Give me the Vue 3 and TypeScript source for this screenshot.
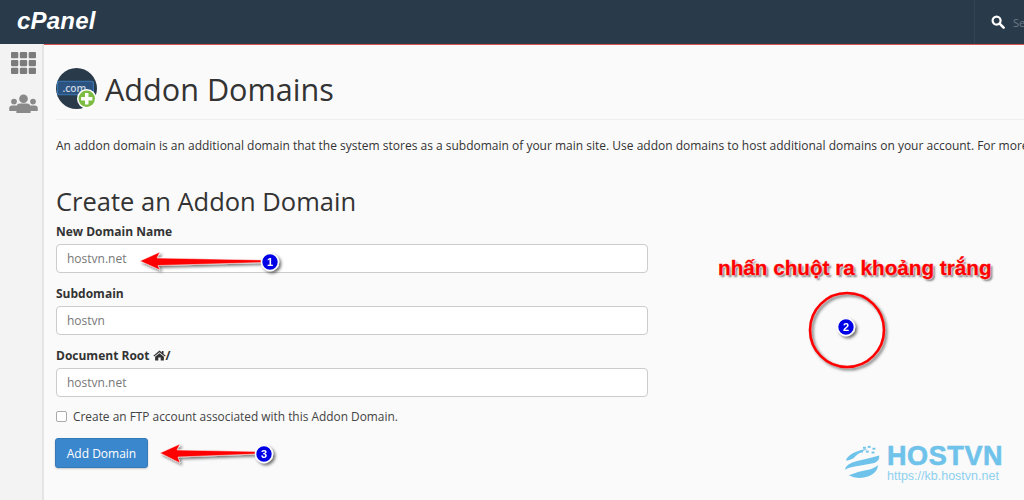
<template>
  <div class="page">
    <header class="topbar">
      <span class="logo">cPanel</span>
      <div class="search">
        <svg class="search-icon" viewBox="0 0 14 14" width="14" height="14">
          <circle cx="5.6" cy="5.6" r="4" fill="none" stroke="#fff" stroke-width="2.2" />
          <path d="M8.6 8.6 L12.6 12.6" stroke="#fff" stroke-width="2.6" stroke-linecap="round" />
        </svg>
        <span class="search-text">Se</span>
      </div>
    </header>

    <div class="body">
      <aside class="sidebar">
        <svg viewBox="0 0 24 21" width="25" height="22">
          <rect v-for="c in gridCells" :key="c.x + '-' + c.y" :x="c.x" :y="c.y" width="7" height="6" rx="1" fill="#7c7c7c" />
        </svg>
        <svg viewBox="0 0 30 20" width="31" height="19">
          <g fill="#8a8a8a">
            <circle cx="5" cy="8" r="3" />
            <circle cx="25" cy="8" r="3" />
            <path d="M0 18 v-3 q0-3 3-3 h4 q2 0 2 3 v3z" />
            <path d="M30 18 v-3 q0-3-3-3 h-4 q-2 0-2 3 v3z" />
            <circle cx="15" cy="5" r="4.6" />
            <path d="M7.5 20 v-6 q0-4 4-4 h7 q4 0 4 4 v6z" />
          </g>
        </svg>
      </aside>

      <main class="content">
        <div class="title-row">
          <svg class="app-icon" viewBox="0 0 40 40" width="41" height="41">
            <circle cx="20" cy="20" r="20" fill="#293a4a" />
            <rect x="1.5" y="13" width="35" height="13" rx="2" fill="#2c5380" stroke="#3a78b5" stroke-width="1" />
            <text x="18" y="23" text-anchor="middle" class="icon-text">.com</text>
            <circle cx="30" cy="30" r="9.5" fill="#fff" />
            <circle cx="30" cy="30" r="8" fill="#7dbb42" />
            <path d="M30 24.5 v11 M24.5 30 h11" stroke="#fff" stroke-width="3.4" />
          </svg>
          <h1 class="title">Addon Domains</h1>
        </div>

        <p class="intro">An addon domain is an additional domain that the system stores as a subdomain of your main site. Use addon domains to host additional domains on your account. For more</p>

        <h2 class="subtitle">Create an Addon Domain</h2>

        <form class="form" @submit.prevent>
          <div v-for="f in fields" :key="f.label" class="field">
            <label class="label">
              {{ f.label }}
              <svg v-if="f.home" class="home" viewBox="0 0 14 12" width="13" height="11">
                <path d="M7 0.5 L0.3 6.2 L1.2 7.2 L7 2.4 L12.8 7.2 L13.7 6.2 L11.4 4.3 V1 H9.6 V2.8z" fill="#333" />
                <path d="M7 3.5 L2.2 7.4 V11.5 H5.7 V8.2 H8.3 V11.5 H11.8 V7.4z" fill="#333" />
              </svg><span v-if="f.home">/</span>
            </label>
            <div class="input">{{ f.value }}</div>
          </div>

          <label class="check">
            <span class="box"></span>
            Create an FTP account associated with this Addon Domain.
          </label>

          <button type="button" class="btn">Add Domain</button>
        </form>
      </main>
    </div>

    <!-- annotations drawn over the screenshot -->
    <svg class="overlay" viewBox="0 0 1024 500" width="1024" height="500">
      <defs>
        <filter id="shade" x="-30%" y="-30%" width="170%" height="170%">
          <feDropShadow dx="2" dy="2" stdDeviation="1.8" flood-color="#000" flood-opacity="0.55" />
        </filter>
      </defs>
      <path d="M140 261 L160 252 L157 258 L264 260 L264 262.5 L158 265.5 L160 270z" fill="#f00" stroke="#fff" stroke-width="0.5" filter="url(#shade)" />
      <path d="M160 453 L180 444 L177 450 L257 451.5 L257 454 L178 457 L180 463z" fill="#f00" stroke="#fff" stroke-width="0.5" filter="url(#shade)" />
      <circle cx="847" cy="330" r="37" fill="none" stroke="#f00" stroke-width="2.6" filter="url(#shade)" />
      <g v-for="b in badges" :key="b.n" filter="url(#shade)">
        <circle :cx="b.x" :cy="b.y" r="8.5" fill="#0000e6" stroke="#fff" stroke-width="1.6" />
        <text :x="b.x" :y="b.y + 4" text-anchor="middle" class="badge-text">{{ b.n }}</text>
      </g>
    </svg>

    <div class="callout">nhấn chuột ra khoảng trắng</div>

    <div class="brand">
      <svg viewBox="0 0 40 40" width="38" height="38">
        <g fill="#6fc3ea">
          <path d="M2 17 Q6 8 25 5 Q14 10 10 15 Q5 18 2 17z" />
          <path d="M1 27 Q2 21 14 18 Q26 15 37 12 Q38 17 32 20 Q20 22 10 24 Q4 25 1 27z" />
          <path d="M5 33 Q14 29 26 27 Q33 25 36 22 Q35 30 26 34 Q14 38 5 33z" />
          <rect x="20" y="3" width="3" height="2" /><rect x="25" y="2" width="3" height="2" /><rect x="30" y="4" width="3" height="2" />
          <rect x="17" y="7" width="3" height="2" /><rect x="23" y="7" width="3" height="2" /><rect x="29" y="8" width="3" height="2" />
        </g>
      </svg>
      <div class="brand-text">
        <div class="brand-name">HOSTVN</div>
        <div class="brand-url">https://kb.hostvn.net</div>
      </div>
    </div>
  </div>
</template>

<script setup lang="ts">
const gridCells: { x: number; y: number }[] = [];
for (const y of [0, 7.5, 15]) {
  for (const x of [0, 8.5, 17]) gridCells.push({ x, y });
}

const fields = [
  { label: "New Domain Name", value: "hostvn.net", home: false },
  { label: "Subdomain", value: "hostvn", home: false },
  { label: "Document Root", value: "hostvn.net", home: true },
];

const badges = [
  { n: 1, x: 270, y: 262 },
  { n: 2, x: 846, y: 327 },
  { n: 3, x: 264, y: 454 },
];
</script>

<style scoped>
.page {
  position: relative;
  width: 1024px;
  height: 500px;
  overflow: hidden;
  background: #fafafa;
  font-family: "Open Sans", "Liberation Sans", sans-serif;
  color: #333;
}
.topbar {
  height: 45px;
  background: #293a4a;
  border-bottom: 1px solid #d9534f;
  box-sizing: border-box;
  display: flex;
  align-items: center;
  justify-content: space-between;
}
.logo {
  margin-left: 17px;
  margin-bottom: 2px;
  font-family: "Liberation Sans", sans-serif;
  font-size: 24px;
  font-weight: 700;
  font-style: italic;
  letter-spacing: 0.2px;
  color: #fff;
}
.search {
  width: 50px;
  height: 44px;
  border-left: 1px solid #324555;
  display: flex;
  align-items: center;
  gap: 8px;
  padding-left: 16px;
  box-sizing: border-box;
}
.search-icon {
  flex: none;
}
.search-text {
  font-size: 11px;
  color: #6d7a86;
}
.body {
  display: flex;
  height: 455px;
}
.sidebar {
  flex: none;
  width: 44px;
  margin-top: -1px;
  background: #f3f3f3;
  border-right: 2px solid #e4e4e4;
  box-sizing: border-box;
  display: flex;
  flex-direction: column;
  align-items: center;
  gap: 20px;
  padding: 8px 0 0 5px;
}
.content {
  flex: 1;
  min-width: 0;
  padding: 0 0 0 12px;
  overflow: hidden;
}
.title-row {
  display: flex;
  align-items: center;
  gap: 8px;
  height: 75px;
  padding-top: 13px;
  box-sizing: border-box;
  width: 968px;
  border-bottom: 1px solid #eee;
}
.app-icon {
  flex: none;
}
.icon-text {
  font-family: "Open Sans", sans-serif;
  font-size: 10px;
  font-weight: 600;
  fill: #c8d6e2;
}
.title {
  margin: 0;
  font-size: 30.6px;
  font-weight: 400;
  line-height: 40px;
  color: #333;
}
.intro {
  margin: 17px 0 0;
  font-size: 12px;
  line-height: 18px;
  white-space: nowrap;
}
.subtitle {
  margin: 30px 0 0;
  font-size: 25.5px;
  font-weight: 400;
  line-height: 32px;
}
.form {
  width: 592px;
  margin-top: 6px;
}
.field {
  margin-bottom: 12px;
}
.label {
  display: block;
  font-size: 12px;
  font-weight: 700;
  line-height: 17px;
  margin-bottom: 4px;
}
.home {
  vertical-align: -1px;
}
.input {
  height: 29px;
  box-sizing: border-box;
  padding: 0 10px;
  background: #fff;
  border: 1px solid #ccc;
  border-radius: 4px;
  font-size: 12px;
  line-height: 27px;
  color: #777;
}
.check {
  display: flex;
  align-items: center;
  gap: 6px;
  font-size: 11.9px;
  line-height: 17px;
  margin-top: -1px;
  color: #444;
}
.box {
  width: 11px;
  height: 11px;
  box-sizing: border-box;
  background: #fff;
  border: 1px solid #aaa;
  border-radius: 2px;
}
.btn {
  display: block;
  width: 93px;
  height: 30px;
  margin: 13px 0 0 -1px;
  padding: 0;
  background: #3a87cd;
  border: 1px solid #3479b8;
  border-radius: 3px;
  box-shadow: 0 1px 2px rgba(0, 0, 0, 0.2);
  font-family: inherit;
  font-size: 12px;
  color: #fff;
}
.overlay {
  position: absolute;
  left: 0;
  top: 0;
  pointer-events: none;
}
.badge-text {
  font-family: "Liberation Sans", sans-serif;
  font-size: 11px;
  font-weight: 700;
  fill: #fff;
}
.callout {
  position: absolute;
  left: 718px;
  top: 255px;
  font-family: "Liberation Sans", sans-serif;
  font-size: 20.7px;
  font-weight: 700;
  line-height: 26px;
  white-space: nowrap;
  color: #f00;
  -webkit-text-stroke: 0.3px #f00;
  text-shadow: 0 0 2px #fff, 0 0 2px #fff, 2px 2px 2px #777;
}
.brand {
  position: absolute;
  left: 844px;
  top: 443px;
  display: flex;
  align-items: center;
  gap: 5px;
}
.brand-name {
  font-family: "Liberation Sans", sans-serif;
  font-size: 27px;
  font-weight: 700;
  line-height: 27px;
  letter-spacing: 0.6px;
  -webkit-text-stroke: 0.6px #6fc3ea;
  color: #6fc3ea;
}
.brand-url {
  font-family: "Liberation Sans", sans-serif;
  font-size: 12.5px;
  line-height: 13px;
  color: #8ed0ee;
}
</style>

<style>
body {
  margin: 0;
}
</style>
